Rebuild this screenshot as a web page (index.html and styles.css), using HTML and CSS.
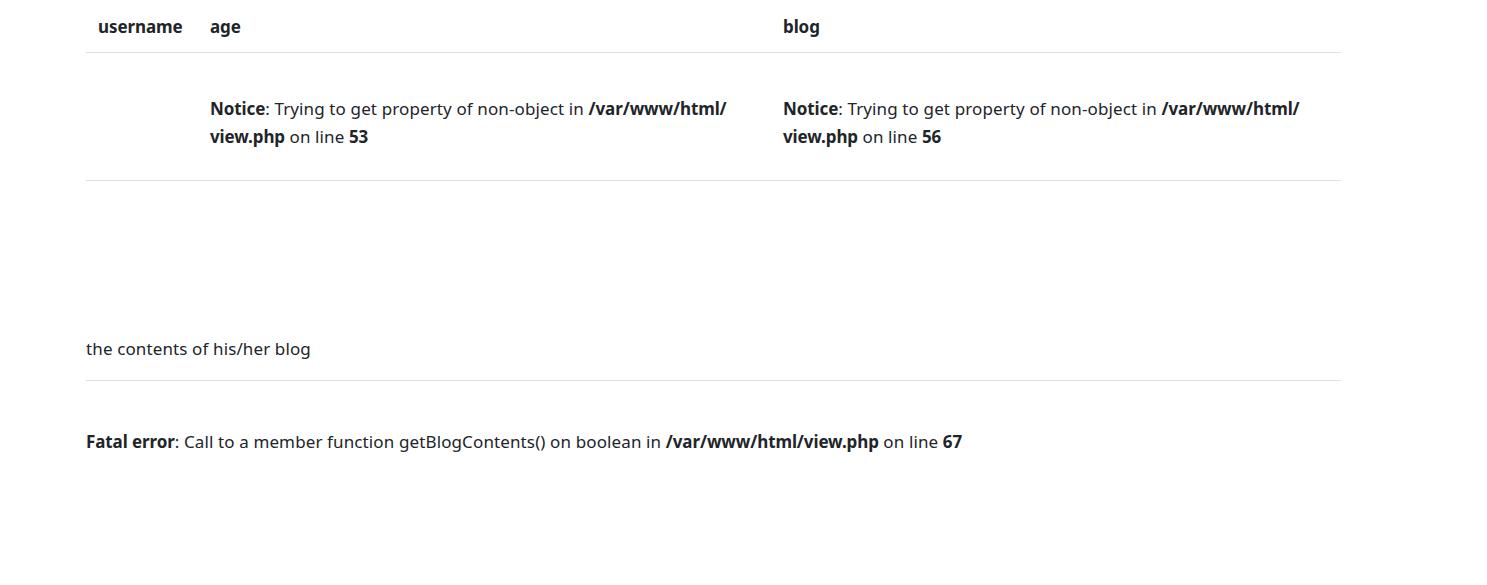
FILE: index.html
```html
<!DOCTYPE html>
<html>
<head>
<meta charset="utf-8">
<link rel="stylesheet" href="styles.css">
</head>
<body>
<div class="container">
  <table class="table">
    <colgroup>
      <col class="c1">
      <col class="c2">
      <col class="c3">
    </colgroup>
    <thead>
      <tr>
        <th>username</th>
        <th>age</th>
        <th>blog</th>
      </tr>
    </thead>
    <tbody>
      <tr>
        <td></td>
        <td><span class="nw"><b>Notice</b>: Trying to get property of non-object in <b>/var/www/html/</b></span><br><span class="nw"><b>view.php</b> on line <b>53</b></span></td>
        <td><span class="nw"><b>Notice</b>: Trying to get property of non-object in <b>/var/www/html/</b></span><br><span class="nw"><b>view.php</b> on line <b>56</b></span></td>
      </tr>
    </tbody>
  </table>
  <div class="contents">the contents of his/her blog</div>
  <hr class="rule">
  <div class="fatal"><b>Fatal error</b>: Call to a member function getBlogContents() on boolean in <b>/var/www/html/view.php</b> on line <b>67</b></div>
</div>
</body>
</html>
```

FILE: styles.css
```css
html, body {
  margin: 0;
  padding: 0;
  background: #ffffff;
}
body {
  font-family: "Noto Sans", "Open Sans", sans-serif;
  font-size: 17px;
  line-height: 28px;
  color: #212529;
  letter-spacing: 0.12px;
}
b { font-weight: 700; letter-spacing: -0.1px; }
.container {
  width: 1255px;
  margin-left: 86px;
}
.table {
  width: 1255px;
  border-collapse: collapse;
  table-layout: fixed;
}
.c1 { width: 112px; }
.c2 { width: 573px; }
.c3 { width: 570px; }
.table th {
  text-align: left;
  font-weight: 700;
  letter-spacing: -0.1px;
  padding: 13px 12px 11px;
  border-bottom: 1px solid #dee2e6;
  vertical-align: bottom;
}
.table td {
  padding: 42px 12px 29px;
  border-bottom: 1px solid #dee2e6;
  vertical-align: top;
}
.nw { white-space: nowrap; }
.contents {
  margin-top: 154px;
}
.rule {
  margin: 17px 0 0;
  border: 0;
  border-top: 1px solid #dee2e6;
  height: 0;
}
.fatal {
  margin-top: 47px;
}
```
